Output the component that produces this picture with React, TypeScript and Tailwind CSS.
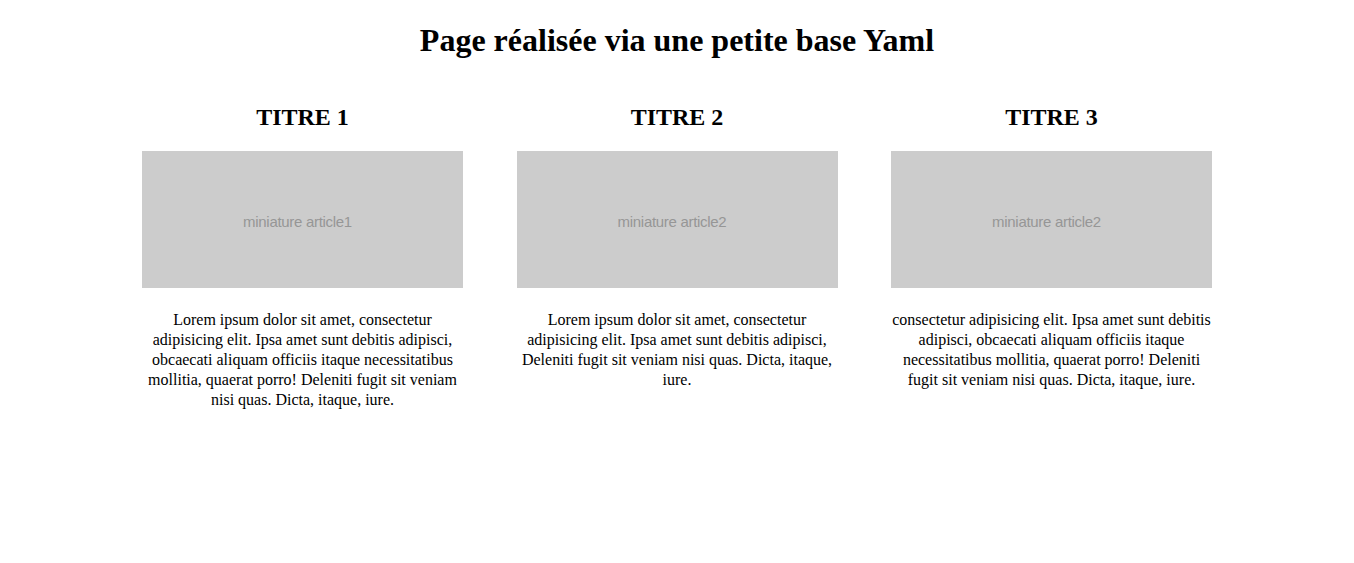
import React from "react";

const articles = [
  {
    title: "TITRE 1",
    thumb: "miniature article1",
    text: "Lorem ipsum dolor sit amet, consectetur adipisicing elit. Ipsa amet sunt debitis adipisci, obcaecati aliquam officiis itaque necessitatibus mollitia, quaerat porro! Deleniti fugit sit veniam nisi quas. Dicta, itaque, iure.",
  },
  {
    title: "TITRE 2",
    thumb: "miniature article2",
    text: "Lorem ipsum dolor sit amet, consectetur adipisicing elit. Ipsa amet sunt debitis adipisci, Deleniti fugit sit veniam nisi quas. Dicta, itaque, iure.",
  },
  {
    title: "TITRE 3",
    thumb: "miniature article2",
    text: "consectetur adipisicing elit. Ipsa amet sunt debitis adipisci, obcaecati aliquam officiis itaque necessitatibus mollitia, quaerat porro! Deleniti fugit sit veniam nisi quas. Dicta, itaque, iure.",
  },
];

export default function App() {
  return (
    <div className="min-h-[563px] bg-white text-black font-['Liberation_Serif',serif]">
      <h1 className="text-center text-[32px] font-bold leading-[37px] pt-[22px] mb-[21px]">
        Page réalisée via une petite base Yaml
      </h1>

      <div className="mx-auto w-[1070px] flex justify-between pt-[23px]">
        {articles.map((a) => (
          <div key={a.title} className="w-[321px] flex flex-col items-center">
            <h2 className="text-[24px] font-bold leading-[28px] mb-[20px]">{a.title}</h2>
            <div className="w-[321px] h-[137px] bg-[#cccccc] flex items-center justify-center">
              <span className="font-['Liberation_Sans',sans-serif] text-[15px] tracking-[-0.3px] text-[#969696] pr-[10px] pt-[6px]">
                {a.thumb}
              </span>
            </div>
            <p className="mt-[22px] text-center text-[16px] leading-[20px]">{a.text}</p>
          </div>
        ))}
      </div>
    </div>
  );
}
